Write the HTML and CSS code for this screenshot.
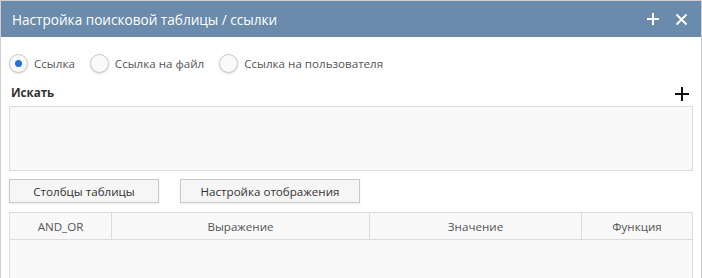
FILE: index.html
```html
<!DOCTYPE html>
<html lang="ru">
<head>
  <meta charset="UTF-8" />
  <title>Настройка поисковой таблицы / ссылки</title>
  <link rel="stylesheet" href="styles.css">
</head>
<body>

  <div class="window">
    <div class="window-header">
      <span class="window-title">Настройка поисковой таблицы / ссылки</span>
      <div class="window-tools">
        <svg width="14" height="14" viewBox="0 0 14 14"><path d="M7 1v12M1 7h12" stroke="#fff" stroke-width="2"/></svg>
        <svg width="13" height="13" viewBox="0 0 13 13"><path d="M1.5 1.5l10 10M11.5 1.5l-10 10" stroke="#fff" stroke-width="2"/></svg>
      </div>
    </div>

    <div class="window-body">
      <div class="link-types">
        <label class="radio checked"><span class="radio-dot"></span>Ссылка</label>
        <label class="radio"><span class="radio-dot"></span>Ссылка на файл</label>
        <label class="radio"><span class="radio-dot"></span>Ссылка на пользователя</label>
      </div>

      <div class="search-head">
        <span class="section-title">Искать</span>
        <svg width="16" height="16" viewBox="0 0 16 16"><path d="M8 1v14M1 8h14" stroke="#111" stroke-width="2"/></svg>
      </div>
      <div class="search-box"></div>

      <div class="button-row">
        <button type="button" class="btn btn-columns">Столбцы таблицы</button>
        <button type="button" class="btn btn-display">Настройка отображения</button>
      </div>

      <div class="grid">
        <div class="grid-head">
          <div>AND_OR</div>
          <div>Выражение</div>
          <div>Значение</div>
          <div>Функция</div>
        </div>
        <div class="grid-body"></div>
      </div>
    </div>
  </div>

</body>
</html>
```

FILE: styles.css
```css
body {
  margin: 0;
  font-family: "Open Sans", "Liberation Sans", sans-serif;
  font-size: 11.6px;
  color: #555;
  background: #fff;
}

.window {
  width: 702px;
  height: 278px;
  box-sizing: border-box;
  border: 1px solid #cfcfcf;
  border-bottom: none;
  overflow: hidden;
}

.window-header {
  height: 36px;
  background-color: #6a8bab;
  display: flex;
  align-items: center;
  justify-content: space-between;
  padding: 0 13px 0 11px;
}

.window-title {
  color: #fff;
  font-size: 13.6px;
}

.window-tools {
  display: flex;
  align-items: center;
  gap: 15px;
}

.window-tools svg {
  display: block;
}

.window-body {
  padding: 0 7px 0 8px;
}

.link-types {
  display: flex;
  align-items: center;
  margin-top: 17px;
  height: 19px;
}

.radio {
  display: flex;
  align-items: center;
  gap: 6px;
  margin-right: 15px;
  color: #555;
}

.radio-dot {
  width: 17px;
  height: 17px;
  border: 1px solid #c8c8c8;
  border-radius: 50%;
  background: #fafafa;
  box-shadow: 0 1px 2px rgba(0,0,0,0.12);
  display: flex;
  align-items: center;
  justify-content: center;
}

.radio.checked .radio-dot::after {
  content: "";
  width: 7px;
  height: 7px;
  border-radius: 50%;
  background: #1f73d8;
}

.search-head {
  display: flex;
  justify-content: space-between;
  align-items: center;
  margin-top: 11px;
  height: 16px;
  padding-right: 4px;
}

.search-head svg {
  display: block;
  margin-top: 3px;
}

.section-title {
  font-weight: bold;
  color: #333;
  padding-left: 2px;
}

.search-box {
  margin-top: 6px;
  margin-right: 1px;
  height: 63px;
  border: 1px solid #dcdcdc;
  background: #f9f9f9;
}

.button-row {
  display: flex;
  gap: 21px;
  margin-top: 8px;
}

.btn {
  height: 24px;
  box-sizing: border-box;
  border: 1px solid #c9c9c9;
  background: #f6f6f6;
  box-shadow: 0 1px 2px rgba(0,0,0,0.08);
  font-family: inherit;
  font-size: 11.6px;
  color: #333;
  padding: 0;
}

.btn-columns {
  width: 150px;
}

.btn-display {
  width: 180px;
}

.grid {
  margin-top: 9px;
  margin-right: 1px;
  border: 1px solid #dcdcdc;
  background: #f9f9f9;
}

.grid-head {
  display: grid;
  grid-template-columns: 101px 258px 212px 1fr;
  height: 26px;
  border-bottom: 1px solid #dcdcdc;
}

.grid-head div {
  display: flex;
  align-items: center;
  justify-content: center;
  border-left: 1px solid #dcdcdc;
  color: #555;
}

.grid-head div:first-child {
  border-left: none;
}

.grid-body {
  height: 60px;
}
```
